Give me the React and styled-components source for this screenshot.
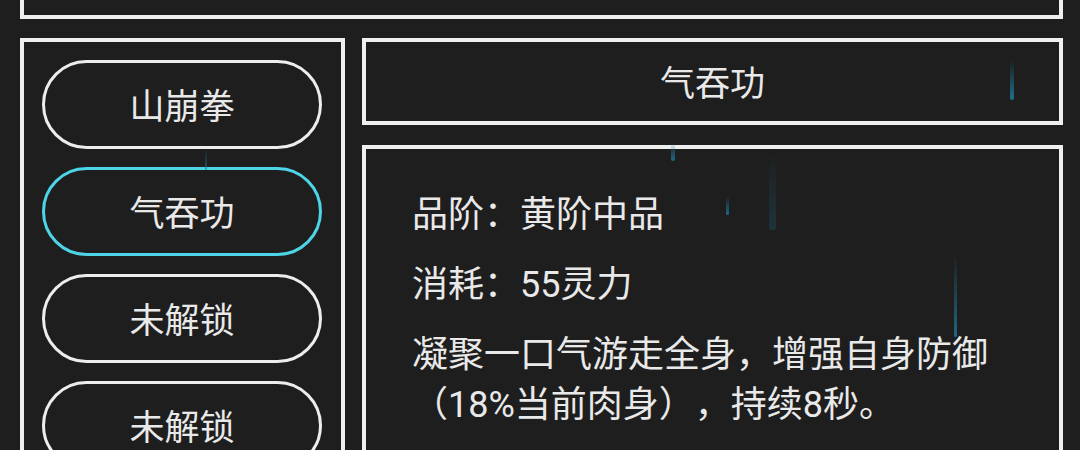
import React from 'react'
import styled, { createGlobalStyle } from 'styled-components'

const GlobalStyle = createGlobalStyle`
  html, body {
    margin: 0;
    padding: 0;
    background: #1e1e1e;
    overflow: hidden;
  }
  body {
    font-family: Roboto, "Noto Sans CJK SC", sans-serif;
    color: #e9e9e9;
    text-spacing-trim: space-all;
  }
`;

const Page = styled.div`
  position: relative;
  width: 1080px;
  height: 450px;
  padding: 0 17px 0 20px;
  box-sizing: border-box;
  display: flex;
  flex-direction: column;
  gap: 19px;
  overflow: hidden;
`;

const TopPanel = styled.div`
  height: 15px;
  border: 4px solid #efefef;
  border-top: none;
  flex-shrink: 0;
`;

const Body = styled.div`
  display: grid;
  grid-template-columns: 325px 701px;
  gap: 17px;
  flex: 1;
  min-height: 0;
`;

const SkillList = styled.div`
  border: 4px solid #efefef;
  padding: 18px 0 0 18px;
  display: flex;
  flex-direction: column;
  gap: 18px;
  height: 500px;
  box-sizing: border-box;
`;

const SkillButton = styled.div`
  width: 280px;
  height: 89px;
  flex-shrink: 0;
  box-sizing: border-box;
  border: 3px solid ${p => (p.$active ? '#4dd4e6' : '#ededed')};
  border-radius: 45px;
  display: flex;
  align-items: center;
  justify-content: center;
  padding-bottom: 3px;
  font-size: 35px;
`;

const Right = styled.div`
  display: flex;
  flex-direction: column;
  gap: 20px;
`;

const TitleBox = styled.div`
  height: 87px;
  box-sizing: border-box;
  border: 4px solid #efefef;
  display: flex;
  align-items: center;
  justify-content: center;
  padding-bottom: 3px;
  font-size: 35px;
`;

const InfoBox = styled.div`
  border: 4px solid #efefef;
  padding: 41px 46px 0 46px;
  height: 400px;
  box-sizing: border-box;
`;

const Line = styled.p`
  margin: 0 0 20px 0;
  font-size: 36px;
  line-height: 50px;
`;

const Rain = styled.div`
  position: absolute;
  inset: 0;
  pointer-events: none;
`;

const Drop = styled.div`
  position: absolute;
  left: ${p => p.$x}px;
  top: ${p => p.$y}px;
  width: ${p => p.$w}px;
  height: ${p => p.$h}px;
  opacity: ${p => p.$o};
  border-radius: 2px;
  background: linear-gradient(to bottom, rgba(30, 110, 140, 0), #1f7393);
`;

const skills = [
  { name: '山崩拳' },
  { name: '气吞功', active: true },
  { name: '未解锁' },
  { name: '未解锁' },
];

const drops = [
  { x: 205, y: 148, w: 2, h: 22, o: 0.6 },
  { x: 671, y: 143, w: 4, h: 18, o: 0.9 },
  { x: 726, y: 196, w: 3, h: 19, o: 0.9 },
  { x: 769, y: 150, w: 7, h: 80, o: 0.25 },
  { x: 954, y: 253, w: 3, h: 84, o: 0.85 },
  { x: 1010, y: 60, w: 4, h: 40, o: 0.95 },
];

export default function App() {
  return (
    <>
      <GlobalStyle />
      <Page>
        <TopPanel />
        <Body>
          <SkillList>
            {skills.map((s, i) => (
              <SkillButton key={i} $active={s.active}>{s.name}</SkillButton>
            ))}
          </SkillList>
          <Right>
            <TitleBox>气吞功</TitleBox>
            <InfoBox>
              <Line>品阶：黄阶中品</Line>
              <Line>消耗：55灵力</Line>
              <Line>凝聚一口气游走全身，增强自身防御（18%当前肉身），持续8秒。</Line>
            </InfoBox>
          </Right>
        </Body>
        <Rain>
          {drops.map((d, i) => (
            <Drop key={i} $x={d.x} $y={d.y} $w={d.w} $h={d.h} $o={d.o} />
          ))}
        </Rain>
      </Page>
    </>
  )
}
